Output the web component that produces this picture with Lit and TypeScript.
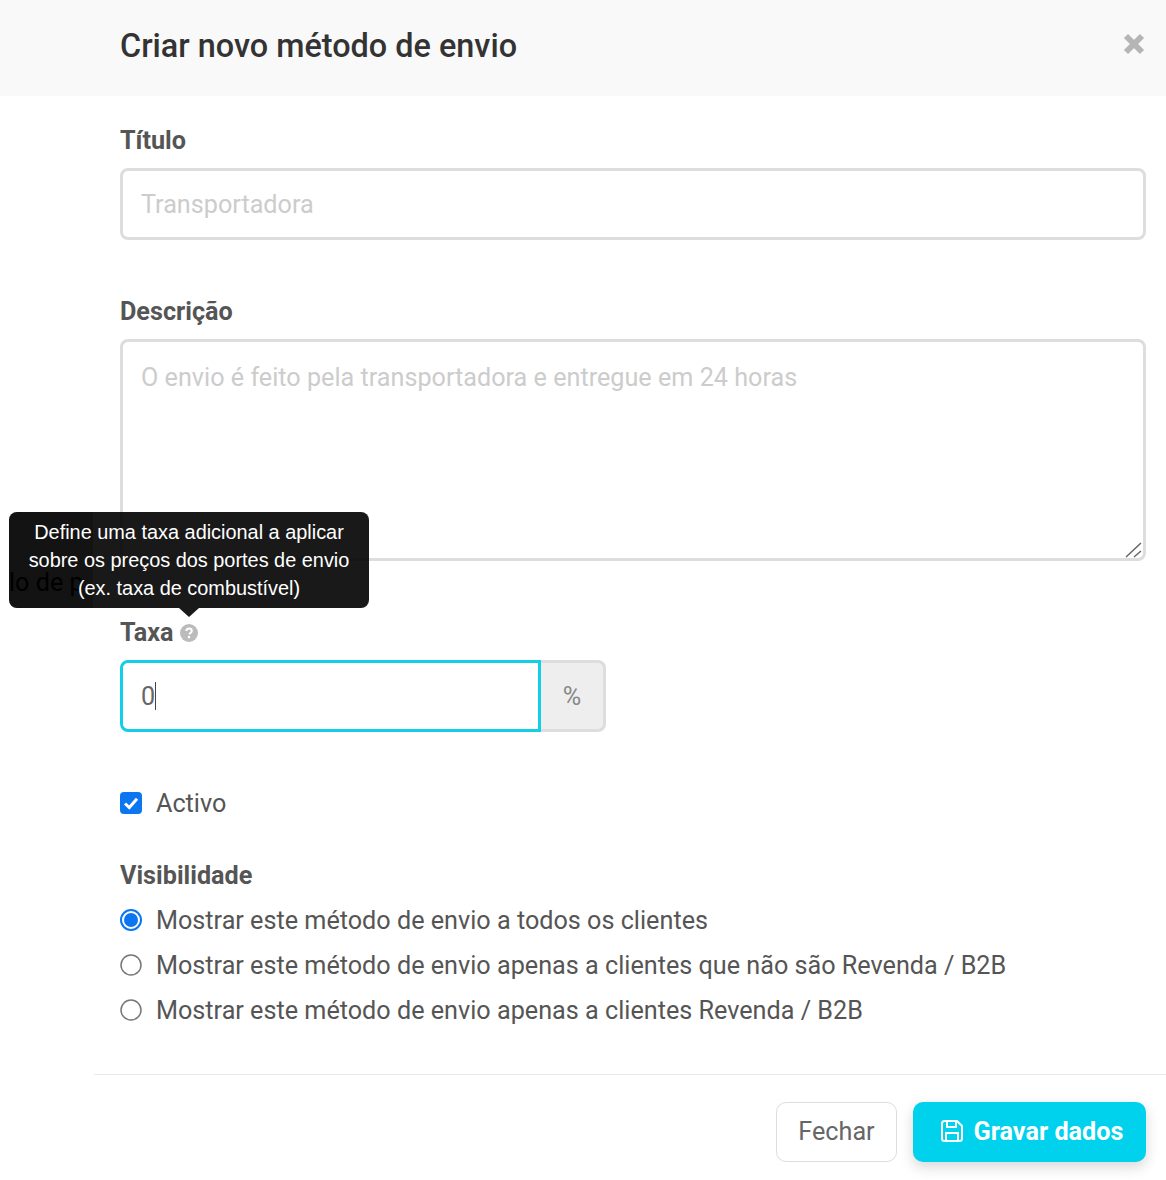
import { LitElement, html, css } from "lit";
import { customElement } from "lit/decorators.js";

@customElement("app-root")
export class AppRoot extends LitElement {
  static styles = css`
    :host { display: block; position: relative; width: 1166px; height: 1180px; overflow: hidden; background: #fff; font-family: Roboto, sans-serif; color: #555; }
    .header { height: 96px; background: #f9f9f9; display: flex; align-items: center; justify-content: space-between; padding: 0 20px 4px 120px; box-sizing: border-box; }
    .header h1 { margin: 0; font-size: 32.4px; font-weight: 500; color: #333; line-height: 40px; }
    .close { width: 24px; height: 24px; display: block; margin-bottom: 4px; }
    .body { padding: 29px 20px 0 120px; }
    .label { display: block; font-size: 25.2px; font-weight: 700; line-height: 32px; color: #555; }
    .input { box-sizing: border-box; border: 3px solid #ddd; border-radius: 8px; font-size: 25.2px; line-height: 30px; padding: 2px 18px 0; color: #ccc; display: flex; align-items: center; }
    .title-input { height: 72px; margin-top: 11px; }
    .desc { margin-top: 56px; }
    .textarea { height: 222px; margin-top: 11px; align-items: flex-start; padding-top: 21px; position: relative; }
    .grip { position: absolute; right: 0; bottom: 0; width: 18px; height: 18px; }
    .taxa { margin-top: 56px; display: flex; align-items: center; gap: 6px; }
    .help { width: 18px; height: 18px; }
    .group { display: flex; margin-top: 11px; width: 486px; height: 72px; }
    .group .field { flex: 1; border: 3px solid #13cfe5; border-radius: 8px 0 0 8px; box-sizing: border-box; font-size: 25.2px; color: #666; padding: 0 18px; display: flex; align-items: center; }
    .caret { display: inline-block; width: 1px; height: 28px; background: #444; }
    .addon { width: 65px; box-sizing: border-box; background: #eee; border: 3px solid #ddd; border-left: 0; border-radius: 0 8px 8px 0; font-size: 25.2px; color: #888; display: flex; align-items: center; justify-content: center; }
    .check { margin-top: 54px; display: flex; align-items: center; gap: 14px; font-size: 25.2px; line-height: 36px; }
    .box { width: 22px; height: 22px; display: block; flex: none; margin-bottom: 2px; }
    .vis { margin-top: 38px; }
    .radios { margin-top: 11px; display: flex; flex-direction: column; gap: 9px; }
    .radio { display: flex; align-items: center; gap: 14px; font-size: 25.2px; line-height: 36px; }
    .footer { position: absolute; left: 94px; right: 0; top: 1074px; border-top: 1px solid #eaeaea; height: 106px; box-sizing: border-box; display: flex; justify-content: flex-end; align-items: flex-start; gap: 16px; padding: 27px 20px 0 0; }
    .btn { box-sizing: border-box; height: 60px; border-radius: 10px; font-size: 25.2px; padding-bottom: 2px; display: flex; align-items: center; justify-content: center; }
    .close-btn { width: 121px; border: 1.5px solid #ddd; background: #fff; color: #666; }
    .save { width: 233px; background: #00d2ee; color: #fff; font-weight: 700; gap: 10px; padding-left: 4px; box-shadow: 0 5px 14px rgba(0,0,0,.16); }
    .save svg { width: 24px; height: 24px; }
    .behind { position: absolute; left: 9px; top: 512px; width: 84px; height: 96px; overflow: hidden; background: #c0c0c0; border-radius: 8px 0 0 8px; }
    .behind span { position: absolute; left: 0; top: 53px; font-size: 25.2px; color: #000; line-height: 36px; white-space: nowrap; }
    .tooltip { position: absolute; left: 9px; top: 512px; width: 360px; height: 96px; box-sizing: border-box; border-radius: 8px; background: rgba(0,0,0,.9); color: #fff; font-family: "Liberation Sans", Arial, sans-serif; font-size: 19.9px; line-height: 28px; padding: 6px 0; text-align: center; }
    .tooltip::after { content: ""; position: absolute; left: 170px; top: 96px; border: 10px solid transparent; border-top: 9px solid rgba(0,0,0,.9); border-bottom: 0; }
  `;

  render() {
    return html`
      <div class="header">
        <h1>Criar novo método de envio</h1>
        <svg class="close" viewBox="0 0 24 24"><path d="M4 4 20 20M20 4 4 20" stroke="#b5b5b5" stroke-width="6"/></svg>
      </div>
      <div class="body">
        <label class="label">Título</label>
        <div class="input title-input">Transportadora</div>
        <label class="label desc">Descrição</label>
        <div class="input textarea">O envio é feito pela transportadora e entregue em 24 horas
          <svg class="grip" viewBox="0 0 18 18"><path d="M1 17 16 3M9 17 16 11" stroke="#666" stroke-width="1.5" fill="none"/></svg>
        </div>
        <label class="label taxa">Taxa
          <svg class="help" viewBox="0 0 18 18"><circle cx="9" cy="9" r="9" fill="#bbb"/><path d="M6.3 7c.2-1.6 1.3-2.4 2.8-2.4 1.6 0 2.7 1 2.7 2.3 0 1.9-2.3 1.9-2.3 3.6" stroke="#fff" stroke-width="2" fill="none"/><rect x="7.9" y="12" width="2.2" height="2.2" fill="#fff"/></svg>
        </label>
        <div class="group">
          <div class="field">0<span class="caret"></span></div>
          <div class="addon">%</div>
        </div>
        <div class="check">
          <svg class="box" viewBox="0 0 22 22"><rect width="22" height="22" rx="4" fill="#0b76f0"/><path d="M5 11.5 9.3 15.5 17 6.8" stroke="#fff" stroke-width="3" fill="none"/></svg>
          Activo
        </div>
        <label class="label vis">Visibilidade</label>
        <div class="radios">
          <div class="radio"><svg class="box" viewBox="0 0 22 22"><circle cx="11" cy="11" r="10" fill="#fff" stroke="#0b76f0" stroke-width="2"/><circle cx="11" cy="11" r="7" fill="#0b76f0"/></svg>Mostrar este método de envio a todos os clientes</div>
          <div class="radio"><svg class="box" viewBox="0 0 22 22"><circle cx="11" cy="11" r="10" fill="#fff" stroke="#777" stroke-width="1.5"/></svg>Mostrar este método de envio apenas a clientes que não são Revenda / B2B</div>
          <div class="radio"><svg class="box" viewBox="0 0 22 22"><circle cx="11" cy="11" r="10" fill="#fff" stroke="#777" stroke-width="1.5"/></svg>Mostrar este método de envio apenas a clientes Revenda / B2B</div>
        </div>
      </div>
      <div class="footer">
        <div class="btn close-btn">Fechar</div>
        <div class="btn save">
          <svg viewBox="0 0 24 24" fill="none" stroke="#fff" stroke-width="2"><path d="M2 4.5A2.5 2.5 0 0 1 4.5 2H17l5 5v12.5a2.5 2.5 0 0 1-2.5 2.5h-15A2.5 2.5 0 0 1 2 19.5z"/><path d="M7 2v6h9V2M6 22v-8h12v8"/></svg>
          Gravar dados
        </div>
      </div>
      <div class="behind"><span>lo de p</span></div>
      <div class="tooltip">Define uma taxa adicional a aplicar<br>sobre os preços dos portes de envio<br>(ex. taxa de combustível)</div>
    `;
  }
}
